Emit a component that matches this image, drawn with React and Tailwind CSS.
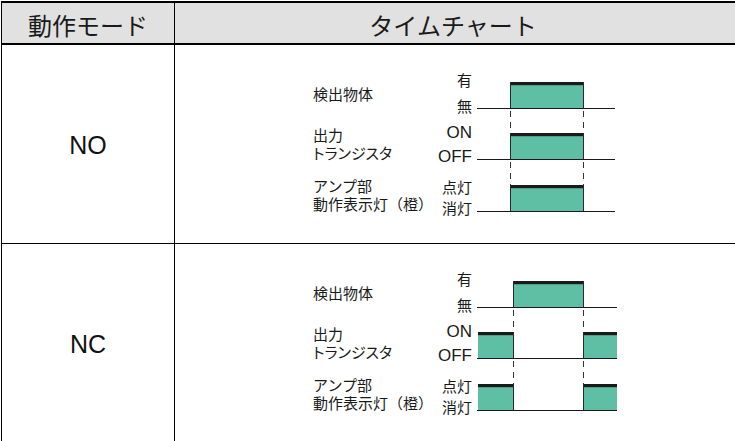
import React from 'react'

const JP = { fontFamily: '"Noto Sans CJK JP", sans-serif' }
// Liberation first keeps the line box tight; the kana/kanji fall back to Noto
const JP_TIGHT = { fontFamily: '"Liberation Sans", "Noto Sans CJK JP", sans-serif' }
const LATIN = { fontFamily: '"Liberation Sans", sans-serif' }
const GREEN = '#5ebfa4'

// high segments per signal: [x, width]
const MODES = {
  NO: [[[35, 73]], [[35, 73]], [[35, 73]]],
  NC: [[[38, 70]], [[3, 35], [108, 34]], [[3, 35], [108, 34]]],
}
const LEVELS = [{ top: 12, base: 38 }, { top: 63, base: 89 }, { top: 115, base: 141 }]

function Wave({ mode }) {
  const segs = MODES[mode]
  const lineEnd = mode === 'NO' ? 140 : 142
  const edges = mode === 'NO' ? [35, 108] : [38, 108]
  return (
    <svg width="145" height="146" viewBox="0 0 145 146" className="flex-none">
      {LEVELS.map((lv, i) => (
        <g key={i}>
          {segs[i].map(([x, w], j) => (
            <g key={j}>
              <rect x={x} y={lv.top} width={w} height={lv.base - lv.top} fill={GREEN} />
              <rect x={x} y={lv.top} width={w} height="3.2" fill="#1a1a1a" />
            </g>
          ))}
          {edges.map(x => (
            <line key={x} x1={x + 0.5} y1={lv.top} x2={x + 0.5} y2={lv.base} stroke="#2a2a2a" strokeWidth="1" />
          ))}
          <line x1="2" y1={lv.base + 0.5} x2={lineEnd} y2={lv.base + 0.5} stroke="#1a1a1a" strokeWidth="1" />
          {i < 2 && edges.map(x => (
            <line key={'d' + x} x1={x + 0.5} y1={lv.base + 3} x2={x + 0.5} y2={LEVELS[i + 1].top}
              stroke="#333" strokeWidth="1" strokeDasharray="6 5" />
          ))}
        </g>
      ))}
    </svg>
  )
}

function Chart({ mode }) {
  return (
    <div className="flex text-[15px] leading-[18px] text-[#1a1a1a]" style={JP}>
      <div className="flex-none w-[120px] whitespace-nowrap" style={JP_TIGHT}>
        <div className="mt-[16px]">検出物体</div>
        <div className="mt-[23px]">
          出力<br />
          <span style={{ fontFeatureSettings: '"palt"' }}>トランジスタ</span>
        </div>
        <div className="mt-[15px]">
          アンプ部<br />動作表示灯（橙）
        </div>
      </div>
      <div className="flex-none w-[39px] text-right whitespace-nowrap" style={JP_TIGHT}>
        <div className="mt-[2px]">有</div>
        <div className="mt-[8px]">無</div>
        <div className="mt-[8px] text-[17px]" style={LATIN}>ON</div>
        <div className="mt-[6px] text-[17px]" style={LATIN}>OFF</div>
        <div className="mt-[13px]">点灯</div>
        <div className="mt-[3px]">消灯</div>
      </div>
      <div className="ml-[3px]">
        <Wave mode={mode} />
      </div>
    </div>
  )
}

function Row({ mode }) {
  return (
    <div className="flex h-[199px] border-b border-black">
      <div className="flex-none w-[173px] border-r border-black flex items-center justify-center pt-[3px] text-[25px] text-[#111]"
        style={LATIN}>
        {mode}
      </div>
      <div className="flex-1 pl-[138px] pt-[25px]">
        <Chart mode={mode} />
      </div>
    </div>
  )
}

export default function App() {
  return (
    <div className="w-[735px] h-[441px] overflow-hidden bg-white pt-[1px] pl-[1px]">
      <div className="border-l border-black">
        <div className="flex h-[44px] border-t-2 border-b-2 border-black bg-[#e1e1e1] text-[24px] text-[#1a1a1a]" style={JP}>
          <div className="flex-none w-[173px] border-r border-black flex items-center justify-center pt-[4px]">
            動作モード
          </div>
          <div className="flex-1 flex items-center justify-center pt-[4px] pr-[4px]">
            タイムチャート
          </div>
        </div>
        <Row mode="NO" />
        <Row mode="NC" />
      </div>
    </div>
  )
}
